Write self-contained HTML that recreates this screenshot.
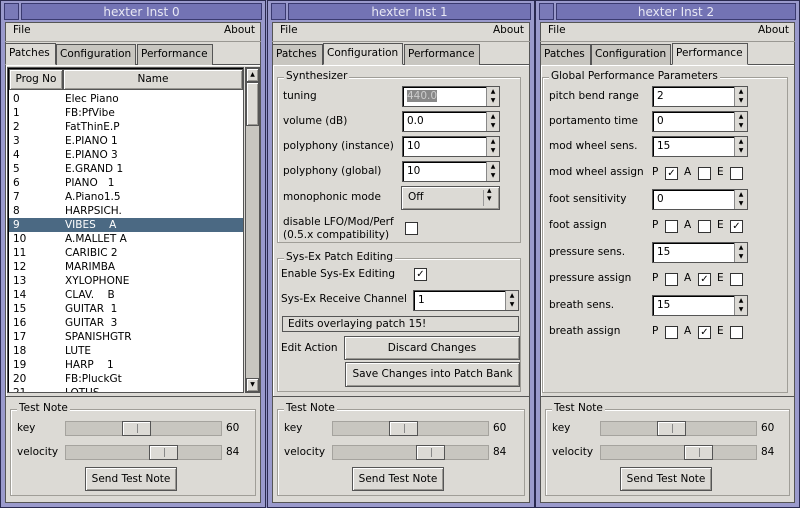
<!DOCTYPE html>
<html><head><meta charset="utf-8"><style>
*{box-sizing:border-box;margin:0;padding:0}
body{width:800px;height:508px;background:#9595c6;font-family:"DejaVu Sans","Liberation Sans",sans-serif;font-size:10.5px;color:#000;position:relative;overflow:hidden}
.a{position:absolute;white-space:nowrap}
.win{position:absolute;top:0;height:508px;background:#9a9acc;border:1px solid #2a2a50}
.title{position:absolute;left:20px;right:3px;top:2px;height:17px;background:#7373b4;color:#e8e8f4;text-align:center;line-height:17px;font-size:12px;border:1px solid #3a3a70}
.tbtn{position:absolute;left:3px;top:2px;width:15px;height:17px;background:#7a7ab8;border:1px solid #3a3a70}
.client{position:absolute;left:4px;right:4px;top:21px;bottom:4px;background:#dcdad5;border:1px solid #555}
.frame{position:absolute;border:1px solid #a09e98;box-shadow:inset 1px 1px 0 #fff}
.flabel{position:absolute;top:-8px;left:6px;background:#dcdad5;padding:0 2px}
.spin{position:absolute;height:21px;background:#fff;border:1px solid #555;border-right:none;box-shadow:inset 1px 1px 0 #000}
.spin span{position:absolute;left:4px;top:3px}
.sb{position:absolute;right:0;top:0;width:14px;height:19px;background:#dcdad5;border-left:1px solid #888;border-right:1px solid #555;font-size:6px;text-align:center;line-height:9px}
.cb{position:absolute;width:13px;height:13px;background:#fff;border:1px solid #333;font-size:10px;line-height:11px;text-align:center}
.btn{position:absolute;background:#dcdad5;border:1px solid #555;box-shadow:inset 1px 1px 0 #fff,inset -1px -1px 0 #9a9893;text-align:center}
.trough{position:absolute;height:15px;background:#c8c6c0;border:1px solid #a5a39e}
.knob{position:absolute;top:-1px;width:29px;height:15px;background:#dcdad5;border:1px solid #555;box-shadow:inset 1px 1px 0 #fff}
.knob:after{content:"";position:absolute;left:14px;top:2px;width:1px;height:9px;background:#888}
.tab{position:absolute;top:44px;height:21px;border:1px solid #555;border-bottom:none;background:#c8c6c0;padding:3px 3px 0}
.tab.on{background:#dcdad5;top:43px;height:22px}
</style></head><body>
<div id="root"></div>
<script>
var names=["Elec Piano","FB:PfVibe","FatThinE.P","E.PIANO 1","E.PIANO 3","E.GRAND 1","PIANO   1","A.Piano1.5","HARPSICH.","VIBES    A","A.MALLET A","CARIBIC 2","MARIMBA","XYLOPHONE","CLAV.    B","GUITAR  1","GUITAR  3","SPANISHGTR","LUTE","HARP    1","FB:PluckGt","LOTUS"];
var h="";
function A(x,y,t,s){h+='<div class="a" style="left:'+x+'px;top:'+y+'px;'+(s||'')+'">'+t+'</div>';}
function spin(x,y,w,v,extra){h+='<div class="spin" style="left:'+x+'px;top:'+y+'px;width:'+w+'px"><span style="'+(extra||'')+'">'+v+'</span><div class="sb">▲<br>▼</div></div>';}
function cb(x,y,c){h+='<div class="cb" style="left:'+x+'px;top:'+y+'px">'+(c?'✓':'')+'</div>';}
function btn(x,y,w,hh,t){h+='<div class="btn" style="left:'+x+'px;top:'+y+'px;width:'+w+'px;height:'+hh+'px;line-height:'+(hh-2)+'px">'+t+'</div>';}
function frame(x,y,w,hh,l){h+='<div class="frame" style="left:'+x+'px;top:'+y+'px;width:'+w+'px;height:'+hh+'px"><div class="flabel">'+l+'</div></div>';}
function pap(x,y,p,a,e){A(x,y-1,'P');cb(x+13,y,p);A(x+32,y-1,'A');cb(x+46,y,a);A(x+65,y-1,'E');cb(x+78,y,e);}
var wx=[0,267,535],ww=[266,268,265];
for(var i=0;i<3;i++){
 var o=wx[i],W=ww[i];
 h+='<div class="win" style="left:'+o+'px;width:'+W+'px"><div class="tbtn"></div><div class="title">hexter Inst '+i+'</div><div class="client"></div></div>';
 A(o+13,24,'File');A(o+W-42,24,'About');
 h+='<div class="a" style="left:'+(o+5)+'px;top:41px;width:'+(W-10)+'px;height:1px;background:#9a9893"></div>';
 h+='<div class="a" style="left:'+(o+5)+'px;top:64px;width:'+(W-10)+'px;height:333px;border:1px solid #555;box-shadow:inset 1px 1px 0 #fff"></div>';
 var tabs=[["Patches",5,51],["Configuration",56,80],["Performance",137,76]];
 for(var t=0;t<3;t++){var on=t==i;h+='<div class="tab'+(on?' on':'')+'" style="left:'+(o+tabs[t][1])+'px;width:'+tabs[t][2]+'px;'+(on?'border-bottom:1px solid #dcdad5;':'')+'">'+tabs[t][0]+'</div>';}
 frame(o+10,409,W-20,87,'Test Note');
 A(o+17,422,'key');A(o+17,446,'velocity');
 h+='<div class="trough" style="left:'+(o+65)+'px;top:421px;width:157px"><div class="knob" style="left:56px"></div></div>';
 h+='<div class="trough" style="left:'+(o+65)+'px;top:445px;width:157px"><div class="knob" style="left:83px"></div></div>';
 A(o+226,422,'60');A(o+226,446,'84');
 btn(o+85,467,92,24,'Send Test Note');
}
h+='<div class="a" style="left:7px;top:67px;width:237px;height:326px;background:#fff;border:1px solid #555;box-shadow:inset 1px 1px 0 #000;overflow:hidden">';
h+='<div class="btn" style="left:1px;top:1px;width:54px;height:21px;line-height:19px">Prog No</div><div class="btn" style="left:55px;top:1px;width:180px;height:21px;line-height:19px">Name</div>';
for(var r=0;r<22;r++){var y=24+r*14;var sel=r==9;h+='<div class="a" style="left:1px;top:'+y+'px;width:234px;height:14px;line-height:14px;'+(sel?'background:#4b6983;color:#fff;':'')+'"><span style="position:absolute;left:4px">'+r+'</span><span style="position:absolute;left:56px;white-space:pre">'+names[r]+'</span></div>';}
h+='</div>';
h+='<div class="a" style="left:245px;top:67px;width:15px;height:326px;background:#c8c6c0;border:1px solid #555"><div class="btn" style="left:0;top:0;width:13px;height:14px;font-size:6px;line-height:12px">▲</div><div class="btn" style="left:0;top:14px;width:13px;height:44px"></div><div class="btn" style="left:0;top:310px;width:13px;height:14px;font-size:6px;line-height:12px">▼</div></div>';
var c=267;
frame(c+10,77,244,166,'Synthesizer');
A(c+16,90,'tuning');A(c+16,115,'volume (dB)');A(c+16,140,'polyphony (instance)');A(c+16,165,'polyphony (global)');A(c+16,191,'monophonic mode');A(c+16,216,'disable LFO/Mod/Perf');A(c+16,229,'(0.5.x compatibility)');
spin(c+135,86,98,'440.0','background:#888;color:#ccc');spin(c+135,111,98,'0.0');spin(c+135,136,98,'10');spin(c+135,161,98,'10');
btn(c+134,186,99,24,'');A(c+141,191,'Off');h+='<div class="a" style="left:'+(c+216)+'px;top:190px;width:1px;height:16px;background:#999"></div>';A(c+220,187,'▴<br>▾','font-size:9px;line-height:8px');
cb(c+138,222,false);
frame(c+10,258,244,134,'Sys-Ex Patch Editing');
A(c+14,268,'Enable Sys-Ex Editing');cb(c+147,268,true);
A(c+14,293,'Sys-Ex Receive Channel');spin(c+146,290,106,'1');
h+='<div class="a" style="left:'+(c+15)+'px;top:316px;width:237px;height:16px;border:1px solid #555;padding-left:5px;line-height:14px">Edits overlaying patch 15!</div>';
A(c+14,342,'Edit Action');btn(c+77,336,176,24,'Discard Changes');btn(c+78,362,175,25,'Save Changes into Patch Bank');
var p=535;
frame(p+7,77,246,316,'Global Performance Parameters');
var rows=[["pitch bend range",'2'],["portamento time",'0'],["mod wheel sens.",'15'],["mod wheel assign",[1,0,0]],["foot sensitivity",'0'],["foot assign",[0,0,1]],["pressure sens.",'15'],["pressure assign",[0,1,0]],["breath sens.",'15'],["breath assign",[0,1,0]]];
var ys=[90,115,140,166,193,219,246,272,299,325];
for(var k=0;k<10;k++){A(p+14,ys[k],rows[k][0]);if(typeof rows[k][1]=='string')spin(p+117,ys[k]-4,96,rows[k][1]);else pap(p+117,ys[k]+1,rows[k][1][0],rows[k][1][1],rows[k][1][2]);}
document.getElementById('root').innerHTML=h;
</script>
</body></html>
